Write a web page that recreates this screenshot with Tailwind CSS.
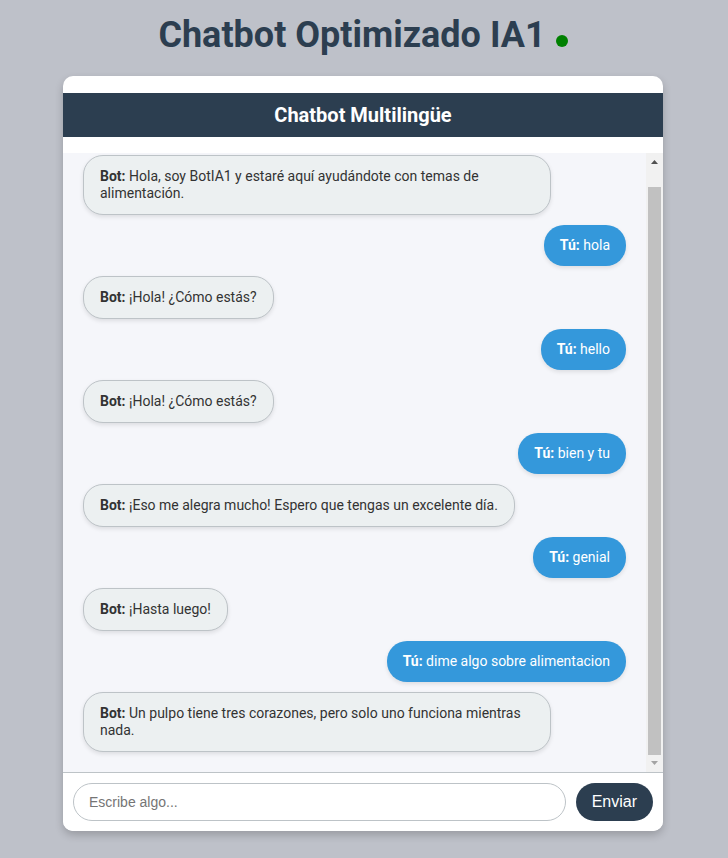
<!DOCTYPE html>
<html lang="es">
<head>
<meta charset="utf-8">
<meta name="viewport" content="width=device-width, initial-scale=1">
<title>Chatbot Optimizado IA1</title>
<script src="https://cdn.jsdelivr.net/npm/@tailwindcss/browser@4"></script>
</head>
<body class="flex min-h-screen flex-col items-center bg-[#bec1c9] pt-[14px] pr-[2px] pb-[27px] font-[Roboto,sans-serif] text-[#333333]">
  <h1 class="mb-5 flex items-baseline gap-[10px] text-[36px] leading-[42px] font-bold text-[#2c3e50]">
    Chatbot Optimizado IA1
    <span class="size-3 rounded-full bg-[#008000]" role="img" aria-label="En línea"></span>
  </h1>

  <main class="flex w-full max-w-[600px] grow flex-col overflow-hidden rounded-[10px] bg-white shadow-[0_4px_8px_rgba(0,0,0,0.2)]">
    <h2 class="mt-[17px] mb-4 bg-[#2c3e50] py-[10px] text-center text-[20px] leading-6 font-bold text-white">Chatbot Multilingüe</h2>

    <section class="flex grow bg-[#f5f6fa]" aria-label="Conversación">
      <div class="flex grow flex-col items-start gap-[10px] px-5 pt-[2px] pb-5 text-[14px] leading-[17px]">
        <p class="max-w-[468px] rounded-[20px] border border-[#bdc3c7] bg-[#ecf0f1] px-4 py-3 shadow-[0_2px_4px_rgba(0,0,0,0.1)]"><strong>Bot:</strong> Hola, soy BotIA1 y estaré aquí ayudándote con temas de alimentación.</p>
        <p class="max-w-[468px] self-end rounded-[20px] bg-[#3498db] px-4 py-3 text-white shadow-[0_2px_4px_rgba(0,0,0,0.1)]"><strong>Tú:</strong> hola</p>
        <p class="max-w-[468px] rounded-[20px] border border-[#bdc3c7] bg-[#ecf0f1] px-4 py-3 shadow-[0_2px_4px_rgba(0,0,0,0.1)]"><strong>Bot:</strong> ¡Hola! ¿Cómo estás?</p>
        <p class="max-w-[468px] self-end rounded-[20px] bg-[#3498db] px-4 py-3 text-white shadow-[0_2px_4px_rgba(0,0,0,0.1)]"><strong>Tú:</strong> hello</p>
        <p class="max-w-[468px] rounded-[20px] border border-[#bdc3c7] bg-[#ecf0f1] px-4 py-3 shadow-[0_2px_4px_rgba(0,0,0,0.1)]"><strong>Bot:</strong> ¡Hola! ¿Cómo estás?</p>
        <p class="max-w-[468px] self-end rounded-[20px] bg-[#3498db] px-4 py-3 text-white shadow-[0_2px_4px_rgba(0,0,0,0.1)]"><strong>Tú:</strong> bien y tu</p>
        <p class="max-w-[468px] rounded-[20px] border border-[#bdc3c7] bg-[#ecf0f1] px-4 py-3 shadow-[0_2px_4px_rgba(0,0,0,0.1)]"><strong>Bot:</strong> ¡Eso me alegra mucho! Espero que tengas un excelente día.</p>
        <p class="max-w-[468px] self-end rounded-[20px] bg-[#3498db] px-4 py-3 text-white shadow-[0_2px_4px_rgba(0,0,0,0.1)]"><strong>Tú:</strong> genial</p>
        <p class="max-w-[468px] rounded-[20px] border border-[#bdc3c7] bg-[#ecf0f1] px-4 py-3 shadow-[0_2px_4px_rgba(0,0,0,0.1)]"><strong>Bot:</strong> ¡Hasta luego!</p>
        <p class="max-w-[468px] self-end rounded-[20px] bg-[#3498db] px-4 py-3 text-white shadow-[0_2px_4px_rgba(0,0,0,0.1)]"><strong>Tú:</strong> dime algo sobre alimentacion</p>
        <p class="max-w-[468px] rounded-[20px] border border-[#bdc3c7] bg-[#ecf0f1] px-4 py-3 shadow-[0_2px_4px_rgba(0,0,0,0.1)]"><strong>Bot:</strong> Un pulpo tiene tres corazones, pero solo uno funciona mientras nada.</p>
      </div>
      <div class="flex w-[17px] shrink-0 flex-col items-center bg-[#f1f1f1]" aria-hidden="true">
        <svg class="size-[17px]" viewBox="0 0 17 17" fill="#505050"><path d="M5 11h7L8.500 7z"/></svg>
        <div class="mt-[17px] w-[13px] grow bg-[#c1c1c1]"></div>
        <svg class="size-[17px]" viewBox="0 0 17 17" fill="#a3a3a3"><path d="M5 6h7L8.500 10z"/></svg>
      </div>
    </section>

    <form class="flex gap-[10px] border-t border-[#bdc3c7] bg-white p-[10px]">
      <input type="text" aria-label="Mensaje" placeholder="Escribe algo..." class="h-[38px] min-w-0 grow rounded-[20px] border border-[#bdc3c7] px-[15px] font-['Liberation_Sans',Arial,sans-serif] text-[14px] placeholder:text-[#757575]">
      <button type="button" class="h-[38px] rounded-[20px] bg-[#2c3e50] px-4 font-['Liberation_Sans',Arial,sans-serif] text-[16px] text-white">Enviar</button>
    </form>
  </main>
</body>
</html>
